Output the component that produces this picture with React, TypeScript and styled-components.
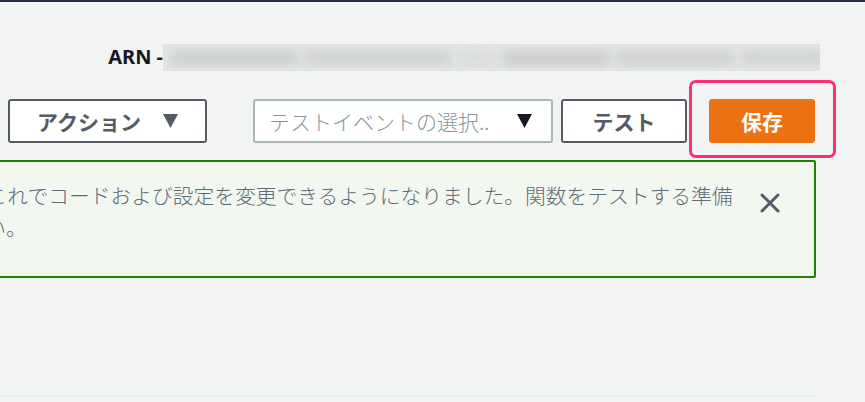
import styled, { createGlobalStyle } from 'styled-components';

const GlobalStyle = createGlobalStyle`
  html, body {
    margin: 0;
    padding: 0;
    overflow: hidden;
    background: #f2f3f3;
  }
  body {
    font-family: 'Noto Sans', 'Noto Sans CJK JP', sans-serif;
  }
`;

const JP = `'Noto Sans CJK JP', 'Noto Sans', sans-serif`;

const Page = styled.div`
  width: 865px;
  height: 402px;
  background: #f2f3f3;
  overflow: hidden;
`;

const TopBar = styled.div`
  height: 2px;
  background: #232f3e;
`;

const ArnRow = styled.div`
  margin-top: 42px;
  height: 27px;
  display: flex;
  align-items: center;
  justify-content: flex-end;
  padding-right: 45px;
`;

const ArnLabel = styled.span`
  font-family: 'Noto Sans', sans-serif;
  font-weight: 700;
  font-size: 20px;
  color: #16191f;
  white-space: pre;
  margin-top: -3px;
`;

const Redacted = styled.div`
  width: 657px;
  height: 27px;
  background: #e4e6e6;
  overflow: hidden;
  display: flex;
  align-items: center;
  gap: 4px;
  padding: 0 6px;
  box-sizing: border-box;
`;

const Smudge = styled.span<{ $w: number; $shade: string }>`
  flex: none;
  width: ${(p) => p.$w}px;
  height: 16px;
  border-radius: 8px;
  background: ${(p) => p.$shade};
  filter: blur(5px);
`;

const Toolbar = styled.div`
  margin-top: 28px;
  height: 44px;
  display: flex;
  justify-content: space-between;
  padding: 0 50px 0 8px;
`;

const Group = styled.div`
  display: flex;
  align-items: stretch;
`;

const OutlineButton = styled.button<{ $w: number }>`
  box-sizing: border-box;
  width: ${(p) => p.$w}px;
  height: 44px;
  background: #fff;
  border: 2px solid #545b64;
  border-radius: 3px;
  font-family: ${JP};
  font-weight: 700;
  font-size: 21px;
  color: #545b64;
  display: flex;
  align-items: center;
  justify-content: center;
  gap: 22px;
  padding: 0;
  cursor: pointer;
`;

const Select = styled.div`
  box-sizing: border-box;
  width: 300px;
  height: 44px;
  margin-right: 8px;
  background: #fff;
  border: 2px solid #aab7b8;
  border-radius: 3px;
  display: flex;
  align-items: center;
  justify-content: space-between;
  padding: 0 19px 0 14px;
`;

const Placeholder = styled.span`
  font-family: ${JP};
  font-weight: 300;
  font-size: 21px;
  color: #879596;
  white-space: nowrap;
`;

const SaveWrap = styled.div`
  position: relative;
  margin-left: 22px;
`;

const Highlight = styled.div`
  position: absolute;
  top: -19px;
  left: -20px;
  right: -21px;
  bottom: -15px;
  border: 3px solid #ff2e6f;
  border-radius: 7px;
  pointer-events: none;
`;

const PrimaryButton = styled.button`
  box-sizing: border-box;
  width: 106px;
  height: 44px;
  background: #ec7211;
  border: 1px solid #ec7211;
  border-radius: 3px;
  font-family: ${JP};
  font-weight: 700;
  font-size: 21px;
  color: #fff;
  padding: 0;
  cursor: pointer;
`;

const Alert = styled.div`
  box-sizing: border-box;
  margin-top: 17px;
  margin-left: -326px;
  margin-right: 49px;
  height: 118px;
  border: 2px solid #1d8102;
  border-radius: 2px;
  background: #f2f8f0;
  display: flex;
  align-items: flex-start;
  padding: 17px 34px 0 20px;
`;

const Message = styled.div`
  flex: 1;
  font-family: ${JP};
  font-weight: 300;
  font-size: 20.75px;
  line-height: 32px;
  color: #5f6b7a;
  white-space: nowrap;
`;

const CloseButton = styled.button`
  flex: none;
  width: 20px;
  height: 20px;
  margin-top: 14px;
  padding: 0;
  border: none;
  background: none;
  display: flex;
  cursor: pointer;
`;

const Divider = styled.div`
  margin-top: 117px;
  margin-right: 49px;
  height: 2px;
  background: #eaeded;
`;

const Caret = ({ color }: { color: string }) => (
  <svg width="15" height="14" viewBox="0 0 15 14">
    <polygon points="0,0 15,0 7.5,14" fill={color} />
  </svg>
);

const CloseIcon = () => (
  <svg width="20" height="20" viewBox="0 0 20 20">
    <path
      d="M2 2 L18 18 M18 2 L2 18"
      stroke="#545b64"
      strokeWidth="3"
      strokeLinecap="round"
      fill="none"
    />
  </svg>
);

const smudges: [number, string][] = [
  [130, '#cfd1d1'],
  [150, '#d2d4d4'],
  [40, '#dadcdc'],
  [110, '#cdcfcf'],
  [120, '#d1d3d3'],
  [90, '#d3d5d5'],
];

const App = () => {
  return (
    <Page>
      <GlobalStyle />
      <TopBar />
      <ArnRow>
        <ArnLabel>ARN -</ArnLabel>
        <Redacted>
          {smudges.map(([w, shade], i) => (
            <Smudge key={i} $w={w} $shade={shade} />
          ))}
        </Redacted>
      </ArnRow>
      <Toolbar>
        <OutlineButton $w={199}>
          アクション
          <Caret color="#545b64" />
        </OutlineButton>
        <Group>
          <Select>
            <Placeholder>テストイベントの選択..</Placeholder>
            <Caret color="#16191f" />
          </Select>
          <OutlineButton $w={126}>テスト</OutlineButton>
          <SaveWrap>
            <PrimaryButton>保存</PrimaryButton>
            <Highlight />
          </SaveWrap>
        </Group>
      </Toolbar>
      <Alert>
        <Message>
          関数が正常に作成されました。これでコードおよび設定を変更できるようになりました。関数をテストする準備
          <br />
          ができたら、テストしてください。
        </Message>
        <CloseButton aria-label="閉じる">
          <CloseIcon />
        </CloseButton>
      </Alert>
      <Divider />
    </Page>
  );
};

export default App;
